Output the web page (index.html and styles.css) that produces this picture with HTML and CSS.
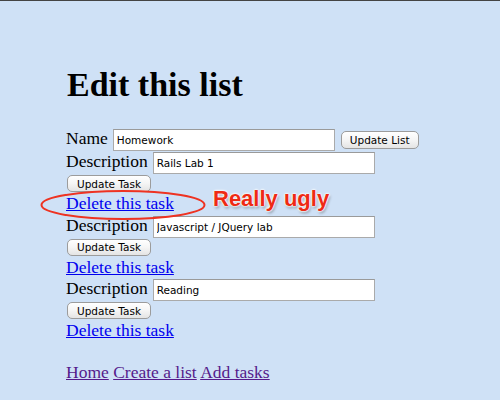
FILE: index.html
```html
<!DOCTYPE html>
<html>
<head>
<meta charset="utf-8">
<link rel="stylesheet" href="styles.css">
</head>
<body>
<div class="page">
  <h1 class="title">Edit this list</h1>
  <form class="list-form">
    <div class="row">
      <label class="label">Name</label>
      <input class="field" type="text" value="Homework">
      <button class="btn btn-list" type="button">Update List</button>
    </div>
  </form>
  <div class="task">
    <div class="row">
      <label class="label">Description</label>
      <input class="field" type="text" value="Rails Lab 1">
    </div>
    <button class="btn btn-task" type="button">Update Task</button>
    <div class="delete"><a class="link" href="#">Delete this task</a></div>
  </div>
  <div class="task">
    <div class="row">
      <label class="label">Description</label>
      <input class="field" type="text" value="Javascript / JQuery lab">
    </div>
    <button class="btn btn-task" type="button">Update Task</button>
    <div class="delete"><a class="link" href="#">Delete this task</a></div>
  </div>
  <div class="task">
    <div class="row">
      <label class="label">Description</label>
      <input class="field" type="text" value="Reading">
    </div>
    <button class="btn btn-task" type="button">Update Task</button>
    <div class="delete"><a class="link" href="#">Delete this task</a></div>
  </div>
  <nav class="footer">
    <a class="visited" href="#">Home</a> <a class="visited" href="#">Create a list</a> <a class="visited" href="#">Add tasks</a>
  </nav>
</div>
<svg class="ring" width="166" height="32" viewBox="0 0 166 32" aria-hidden="true">
  <ellipse cx="83" cy="16" rx="81.5" ry="14" fill="none" stroke="#ee3322" stroke-width="2"/>
</svg>
<div class="note">Really ugly</div>
</body>
</html>
```

FILE: styles.css
```css
html, body {
  margin: 0;
  padding: 0;
}

body {
  background: #cfe1f6;
  border-top: 1px solid #444;
  font-family: "Liberation Serif", "Times New Roman", serif;
  font-size: 17.5px;
  color: #000;
  height: 399px;
  overflow: hidden;
}

.page {
  padding-left: 66px;
}

.title {
  margin: 64px 0 24px 1px;
  font-size: 34px;
  line-height: 40px;
  font-weight: bold;
}

.list-form {
  margin: 0 0 1px;
}

.row {
  display: flex;
  align-items: baseline;
  gap: 5px;
}

.label {
  line-height: 17px;
}

.field {
  box-sizing: border-box;
  width: 222px;
  height: 22px;
  margin: 0;
  padding: 0 3px;
  border: 1px solid #aaa;
  border-top-color: #9a9a9a;
  background: #fff;
  font-family: "DejaVu Sans", sans-serif;
  font-size: 10.5px;
  color: #000;
}

.btn {
  box-sizing: border-box;
  margin: 0;
  padding: 0 9px;
  border: 1px solid #9c9c9c;
  border-radius: 5px;
  background: linear-gradient(#ffffff, #f5f5f5 50%, #e4e4e4);
  font-family: "DejaVu Sans", sans-serif;
  font-size: 10.5px;
  color: #000;
  line-height: 12px;
}

.btn-list {
  height: 18px;
  margin-left: 1px;
  padding: 0 8px;
}

.btn-task {
  display: block;
  height: 17px;
  margin: 1px 0 0 1px;
}

.delete {
  line-height: 23.5px;
}

.link {
  color: #0000ee;
}

.footer {
  margin-top: 19px;
  line-height: 20px;
}

.visited {
  color: #551a8b;
}

.ring {
  position: absolute;
  left: 40px;
  top: 189px;
}

.note {
  position: absolute;
  left: 213px;
  top: 188px;
  font-family: "Liberation Sans", Arial, sans-serif;
  font-weight: bold;
  font-size: 22px;
  line-height: 22px;
  color: #ee2a14;
  text-shadow: 0 0 1px #fff, 0 0 2px #fff, 0 0 2px #fff, 0 0 3px #fff, 1px 2px 3px rgba(0, 0, 0, 0.4);
}
```
